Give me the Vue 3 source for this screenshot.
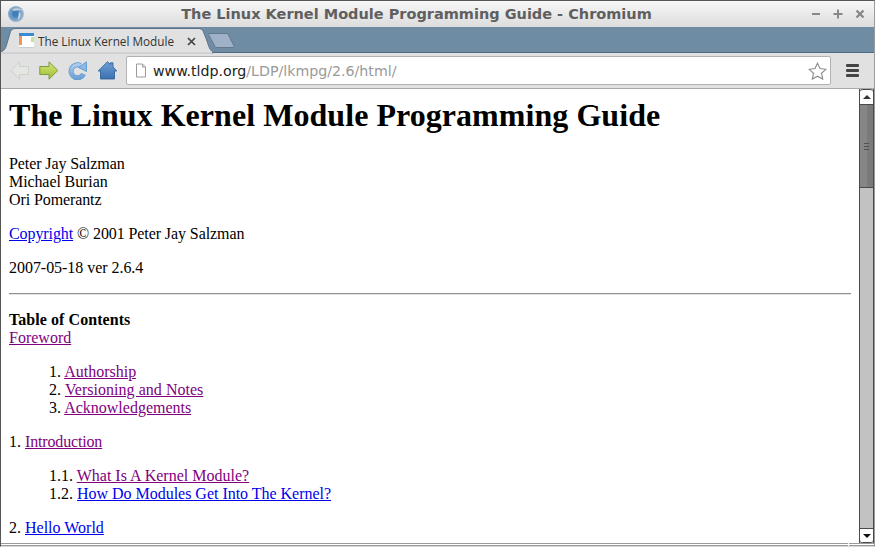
<script setup>
const authors = ['Peter Jay Salzman', 'Michael Burian', 'Ori Pomerantz']
const foreword = [
  { n: '1.', t: 'Authorship', cls: 'visited' },
  { n: '2.', t: 'Versioning and Notes', cls: 'visited faint' },
  { n: '3.', t: 'Acknowledgements', cls: 'visited' }
]
const intro = [
  { n: '1.1.', t: 'What Is A Kernel Module?', cls: 'visited' },
  { n: '1.2.', t: 'How Do Modules Get Into The Kernel?', cls: 'fresh mild' }
]
</script>

<template>
  <div class="window">
    <header class="titlebar">
      <svg class="appicon" width="18" height="18" viewBox="0 0 18 18">
        <defs>
          <radialGradient id="orb" cx=".45" cy=".5" r=".6">
            <stop offset="0" stop-color="#4a86be" />
            <stop offset=".55" stop-color="#6f9cc5" />
            <stop offset="1" stop-color="#b4c6d7" />
          </radialGradient>
        </defs>
        <circle cx="9" cy="9" r="8" fill="url(#orb)" />
        <path d="M5 4.500C8 2.500 13 3 15.500 5.500 12 5 9 5 7.500 6Z" fill="#c3d0dc" />
        <path d="M13 7c1.500 3 .5 6-2.500 8.500 1-2.500 1-4.500 0-6Z" fill="#c9d5df" />
        <circle cx="8.500" cy="9" r="3.200" fill="#3f7fbb" />
      </svg>
      <div class="title">The Linux Kernel Module Programming Guide - Chromium</div>
      <div class="winbtns">
        <svg width="12" height="12" viewBox="0 0 12 12"><path d="M2 6h8" stroke="#888" stroke-width="2" /></svg>
        <svg width="12" height="12" viewBox="0 0 12 12"><path d="M1.500 6h9M6 1.500v9" stroke="#888" stroke-width="2" /></svg>
        <svg width="12" height="12" viewBox="0 0 12 12"><path d="M2.500 2.500l7 7M9.500 2.500l-7 7" stroke="#888" stroke-width="2.400" /></svg>
      </div>
    </header>

    <div class="tabstrip">
      <div class="tab">
        <svg class="tabshape" width="212" height="26" viewBox="0 0 212 26">
          <path d="M-1 26V25C3 24 4.500 22 5.500 18L9 6C10 2.500 12 1.500 15 1.500H197C200 1.500 201.500 2.500 202.500 5L206 14C207.500 19 209 23.500 212 25V26Z" fill="#e1e1e1" stroke="#5a7187" stroke-width="1" />
          <path d="M0 26H211" stroke="#e1e1e1" stroke-width="1.500" />
        </svg>
        <svg class="favicon" width="15" height="16" viewBox="0 0 15 16">
          <rect width="15" height="15" fill="#fff" />
          <rect width="15" height="3" fill="#3a8bd0" />
          <rect y="3" width="3" height="9" fill="#f2935a" />
          <rect x="12" y="4" width="3" height="5" fill="#c4e29a" />
          <rect y="14" width="15" height="1" fill="#c9ced4" />
        </svg>
        <span class="tabtext">The Linux Kernel Module</span>
        <svg class="tabclose" width="9" height="9" viewBox="0 0 9 9"><path d="M1 1l7 7M8 1L1 8" stroke="#444" stroke-width="1.700" /></svg>
      </div>
      <svg class="newtab" width="29" height="17" viewBox="0 0 29 17">
        <path d="M2 1.500H19C20.500 1.500 21 2 22 4L27 14C27.500 15 27 15.500 26 15.500H10C8.500 15.500 8 15 7.500 13.500L2 3.500C1.500 2 1.500 1.500 2 1.500Z" fill="#9fb1c6" stroke="#62788e" />
      </svg>
    </div>

    <nav class="toolbar">
      <svg width="20" height="19" viewBox="0 0 20 19"><path d="M9.500 .8 1 9.500l8.500 8.700V13.500H18.500V5.500H9.500Z" fill="#e4e6e2" stroke="#cdd0cb" /></svg>
      <svg width="20" height="19" viewBox="0 0 20 19">
        <defs>
          <linearGradient id="fwd" x1="0" y1="0" x2="0" y2="1">
            <stop offset="0" stop-color="#d8e675" />
            <stop offset="1" stop-color="#9dbd38" />
          </linearGradient>
        </defs>
        <path d="M10 .8 18.800 9.500 10 18.200V13.500H.8V5.500H10Z" fill="url(#fwd)" stroke="#7d9a3a" />
      </svg>
      <svg width="20" height="19" viewBox="0 0 20 19">
        <defs>
          <linearGradient id="rel" x1="0" y1="0" x2="0" y2="1">
            <stop offset="0" stop-color="#a9cbed" />
            <stop offset="1" stop-color="#6fa3d8" />
          </linearGradient>
        </defs>
        <path d="M15.500 13A6.500 6.500 0 1 1 12.500 4.500" fill="none" stroke="#5f97cd" stroke-width="5" />
        <path d="M15.500 13A6.500 6.500 0 1 1 12.500 4.500" fill="none" stroke="url(#rel)" stroke-width="3.600" />
        <path d="M10.500 6.500 18.500 .8V10.500Z" fill="#8db8e4" stroke="#5f97cd" stroke-width=".9" />
      </svg>
      <svg width="20" height="19" viewBox="0 0 20 19">
        <defs>
          <linearGradient id="hm" x1="0" y1="0" x2="0" y2="1">
            <stop offset="0" stop-color="#6f9fd8" />
            <stop offset="1" stop-color="#3b6fae" />
          </linearGradient>
        </defs>
        <path d="M10.500 .8 13.500 3.500V1.800H16V6L19.800 10H17.500V18H3.500V10H1.200Z" fill="url(#hm)" stroke="#33649f" stroke-width=".9" />
      </svg>
      <div class="omnibox">
        <svg width="12" height="15" viewBox="0 0 12 15"><path d="M1.500 1h6l3 3v10h-9Z" fill="#fff" stroke="#9a9a9a" /><path d="M7.500 1v3h3" fill="#ddd" stroke="#9a9a9a" /></svg>
        <span class="url"><span class="host">www.tldp.org</span>/LDP/lkmpg/2.6/html/</span>
        <svg class="star" width="19" height="18" viewBox="0 0 19 18"><path d="M9.500 1.200 12 6.600l5.900.7-4.400 4 1.200 5.800-5.200-2.900-5.200 2.900 1.200-5.800-4.400-4 5.900-.7Z" fill="#fff" stroke="#8a8a8a" stroke-width="1.100" /></svg>
      </div>
      <div class="menu"><i></i><i></i><i></i></div>
    </nav>

    <div class="viewport">
      <main class="page">
        <h1>The Linux Kernel Module Programming Guide</h1>
        <p class="authors"><span v-for="a in authors" :key="a">{{ a }}</span></p>
        <p class="tight"><a class="fresh">Copyright</a> © 2001 Peter Jay Salzman</p>
        <p class="snug">2007-05-18 ver 2.6.4</p>
        <hr />
        <div class="toc">
          <b class="wide">Table of Contents</b>
          <a class="visited line">Foreword</a>
          <div class="sub">
            <div v-for="f in foreword" :key="f.n">{{ f.n }} <a :class="f.cls">{{ f.t }}</a></div>
          </div>
          <div class="chap">1. <a class="visited tightest">Introduction</a></div>
          <div class="sub">
            <div v-for="s in intro" :key="s.n">{{ s.n }} <a :class="s.cls">{{ s.t }}</a></div>
          </div>
          <div class="chap">2. <a class="fresh">Hello World</a></div>
        </div>
      </main>
      <aside class="scrollbar">
        <div class="sbtn up"><span></span></div>
        <div class="thumb"><i></i><i></i><i></i></div>
        <div class="track"></div>
        <div class="sbtn down"><span></span></div>
      </aside>
    </div>
    <div class="bottomedge"><span></span><span></span></div>
  </div>
</template>

<style>
html, body { margin: 0; overflow: hidden; background: #fff; }
</style>

<style scoped>
.window {
  width: 875px;
  height: 547px;
  box-sizing: border-box;
  border: 1px solid #555;
  border-right-color: #9a9a9a;
  border-bottom-color: #d8d8d8;
  display: flex;
  flex-direction: column;
  overflow: hidden;
  background: #fff;
}
.titlebar {
  height: 26px;
  flex: none;
  display: flex;
  align-items: center;
  position: relative;
  background: linear-gradient(#f7f7f7, #dcdcdc);
}
.appicon { margin-left: 6px; }
.title {
  position: absolute;
  left: 0;
  right: 0;
  text-align: center;
  padding-right: 42px;
  font: bold 14.5px "DejaVu Sans", sans-serif;
  color: #5f5f5f;
}
.winbtns {
  margin-left: auto;
  margin-right: 8px;
  display: flex;
  gap: 10px;
}
.tabstrip {
  height: 26px;
  flex: none;
  display: flex;
  align-items: flex-end;
  background: #6f8ca5;
  box-shadow: inset 0 -1px 0 #516a80;
}
.tab {
  width: 207px;
  height: 26px;
  position: relative;
  display: flex;
  align-items: center;
  flex: none;
}
.tabshape { position: absolute; left: 0; top: 0; overflow: visible; }
.favicon { position: relative; margin-left: 18px; margin-top: 2px; }
.tabtext {
  position: relative;
  margin-left: 4px;
  margin-top: 2px;
  font: 11.75px "Open Sans", sans-serif;
  color: #333;
  white-space: nowrap;
}
.tabclose { position: relative; margin-left: 13px; margin-top: 2px; }
.newtab { margin: 0 0 4px -1px; }
.toolbar {
  height: 36px;
  flex: none;
  box-sizing: border-box;
  display: flex;
  align-items: center;
  gap: 9px;
  padding: 0 0 0 9px;
  background: #e1e1e1;
  border-bottom: 1px solid #a9a9a9;
}
.omnibox {
  width: 705px;
  height: 29px;
  box-sizing: border-box;
  background: #fff;
  border: 1px solid #b2b2b2;
  border-radius: 2px;
  display: flex;
  align-items: center;
  padding: 0 3px 0 8px;
}
.url {
  margin-left: 6px;
  font: 14.2px "DejaVu Sans", sans-serif;
  color: #9a9a9a;
}
.host { color: #222; }
.star { margin-left: auto; }
.menu {
  margin-left: 6px;
  width: 13px;
  display: flex;
  flex-direction: column;
  gap: 2px;
}
.menu i { display: block; height: 3px; border-radius: 1px; background: #444; }
.viewport {
  flex: 1;
  min-height: 0;
  display: flex;
}
.page {
  flex: 1;
  min-width: 0;
  box-sizing: border-box;
  padding: 8px;
  overflow: hidden;
  font: 16px/18px "Liberation Serif", serif;
  color: #000;
}
h1 {
  margin: 0 0 21px;
  letter-spacing: .05px;
  font: bold 32px/37px "Liberation Serif", serif;
}
p { margin: 16px 0; }
.authors { letter-spacing: -.1px; }
.authors span { display: block; }
.tight { letter-spacing: -.09px; }
.snug { letter-spacing: -.04px; }
.mild { letter-spacing: -.02px; }
.faint { letter-spacing: .03px; }
.wide { letter-spacing: .06px; }
.tightest { letter-spacing: -.16px; }
a { text-decoration: underline; }
.fresh { color: #0000ee; }
.visited { color: #800080; }
hr {
  margin: 8px 0 16px;
  border: 0;
  border-top: 1px solid #8f8f8f;
  border-bottom: 1px solid #e4e4e4;
}
.toc b, .line { display: block; }
.sub { margin: 16px 0 16px 40px; }
.scrollbar {
  width: 15px;
  flex: none;
  display: flex;
  flex-direction: column;
  box-sizing: border-box;
  background: #c2c2c2;
  border-left: 1px solid #4a4a4a;
  border-right: 1px solid #4a4a4a;
}
.sbtn {
  height: 15px;
  flex: none;
  box-sizing: border-box;
  display: flex;
  align-items: center;
  justify-content: center;
  background: #fff;
}
.up { border-top: 1px solid #4a4a4a; border-radius: 3px 3px 0 0; }
.down { border-bottom: 1px solid #4a4a4a; border-top: 1px solid #4a4a4a; border-radius: 0 0 3px 3px; }
.sbtn span { width: 0; height: 0; border: 4px solid transparent; }
.up span { border-bottom: 4px solid #333; border-top: 0; }
.down span { border-top: 4px solid #111; border-bottom: 0; }
.thumb {
  height: 84px;
  flex: none;
  display: flex;
  flex-direction: column;
  align-items: center;
  justify-content: center;
  gap: 2px;
  background: linear-gradient(90deg, #868686 0 55%, #7a7a7a 55%);
  border-top: 1px solid #4a4a4a;
  border-bottom: 1px solid #4a4a4a;
  box-sizing: border-box;
}
.thumb i { display: block; width: 5px; height: 1px; background: #505050; }
.track { flex: 1; }
.bottomedge {
  height: 3px;
  flex: none;
  display: flex;
  gap: 1px;
}
.bottomedge span {
  box-sizing: border-box;
  border-top: 1px solid #9a9a9a;
  border-bottom: 1px solid #9a9a9a;
}
.bottomedge span:first-child { width: 847px; }
.bottomedge span:last-child { flex: 1; }
</style>
